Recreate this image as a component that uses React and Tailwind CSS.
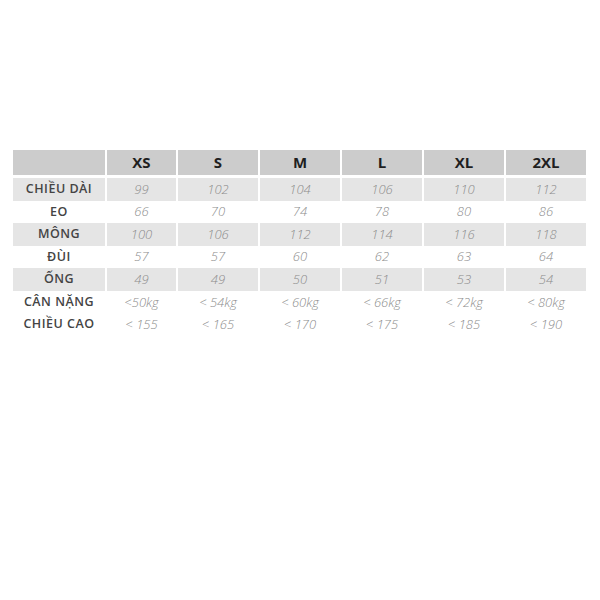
import React from "react";

const sizes = ["XS", "S", "M", "L", "XL", "2XL"];
const rows = [
  ["CHIỀU DÀI", ["99", "102", "104", "106", "110", "112"], true],
  ["EO", ["66", "70", "74", "78", "80", "86"], false],
  ["MÔNG", ["100", "106", "112", "114", "116", "118"], true],
  ["ĐÙI", ["57", "57", "60", "62", "63", "64"], false],
  ["ỐNG", ["49", "49", "50", "51", "53", "54"], true],
  ["CÂN NẶNG", ["<50kg", "< 54kg", "< 60kg", "< 66kg", "< 72kg", "< 80kg"], false],
  ["CHIỀU CAO", ["< 155", "< 165", "< 170", "< 175", "< 185", "< 190"], false],
];

export default function App() {
  return (
    <div
      className="w-[600px] h-[600px] bg-white pt-[150px] pl-[13px]"
      style={{ fontFamily: '"Open Sans", "Liberation Sans", sans-serif' }}
    >
      <div className="grid grid-cols-[92px_69px_80px_80px_80px_80px_80px] gap-x-[2px] w-[573px]">
        <div className="h-[25px] bg-[#cccccc]" />
        {sizes.map((s) => (
          <div
            key={s}
            className="h-[25px] bg-[#cccccc] flex items-center justify-center text-[15px] font-bold text-[#1f1f1f]"
          >
            {s}
          </div>
        ))}
        <div className="col-span-7 h-[3px]" />
        {rows.map(([label, vals, gray]) => (
          <React.Fragment key={label}>
            <div
              className={`h-[22.6px] flex items-center justify-center text-[12.5px] font-semibold text-[#444444] tracking-[0.5px] ${gray ? "bg-[#e5e5e5]" : "bg-white"}`}
            >
              {label}
            </div>
            {vals.map((v, i) => (
              <div
                key={i}
                className={`h-[22.6px] flex items-center justify-center text-[13px] font-light italic text-[#8c8c8c] ${gray ? "bg-[#e5e5e5]" : "bg-white"}`}
              >
                {v}
              </div>
            ))}
          </React.Fragment>
        ))}
      </div>
    </div>
  );
}
